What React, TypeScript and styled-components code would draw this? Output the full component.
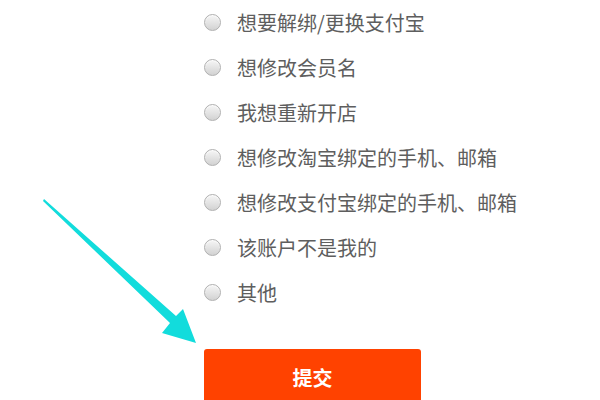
import styled, { createGlobalStyle } from "styled-components";

const GlobalStyle = createGlobalStyle`
  html, body {
    margin: 0;
    padding: 0;
    background: #fff;
  }
  body {
    font-family: "Noto Sans CJK SC", "Liberation Sans", sans-serif;
  }
`;

const Page = styled.div`
  position: relative;
  width: 600px;
  height: 400px;
  overflow: hidden;
  background: #fff;
`;

const Form = styled.form`
  display: flex;
  flex-direction: column;
  padding-left: 204px;
`;

const Option = styled.label`
  display: flex;
  align-items: center;
  height: 45px;
  gap: 16px;
  font-size: 20px;
  color: #5e5e5e;
  cursor: pointer;
  white-space: nowrap;
`;

const Radio = styled.span`
  flex: none;
  width: 15px;
  height: 15px;
  border-radius: 50%;
  border: 1px solid #b0b0b0;
  background: linear-gradient(#f6f6f6, #d2d2d2);
  box-shadow: inset 0 1px 1px rgba(255, 255, 255, 0.8);
`;

const SubmitButton = styled.button`
  margin-top: 34px;
  width: 217px;
  height: 56px;
  border: none;
  border-radius: 3px;
  background: #ff4200;
  color: #fff;
  font-family: "Noto Sans CJK SC", sans-serif;
  font-size: 20px;
  font-weight: 700;
  cursor: pointer;
`;

const ArrowLayer = styled.svg`
  position: absolute;
  left: 0;
  top: 0;
  pointer-events: none;
`;

const reasons = [
  "想要解绑/更换支付宝",
  "想修改会员名",
  "我想重新开店",
  "想修改淘宝绑定的手机、邮箱",
  "想修改支付宝绑定的手机、邮箱",
  "该账户不是我的",
  "其他",
];

const App = () => {
  return (
    <Page>
      <GlobalStyle />
      <Form>
        {reasons.map((r) => (
          <Option key={r}>
            <Radio />
            {r}
          </Option>
        ))}
        <SubmitButton type="button">提交</SubmitButton>
      </Form>
      <ArrowLayer width="600" height="400" viewBox="0 0 600 400">
        <polygon
          points="44,199 176,316 183,309 196,343 162,333 170,323 43,201"
          fill="#12dcdc"
        />
      </ArrowLayer>
    </Page>
  );
};

export default App;
